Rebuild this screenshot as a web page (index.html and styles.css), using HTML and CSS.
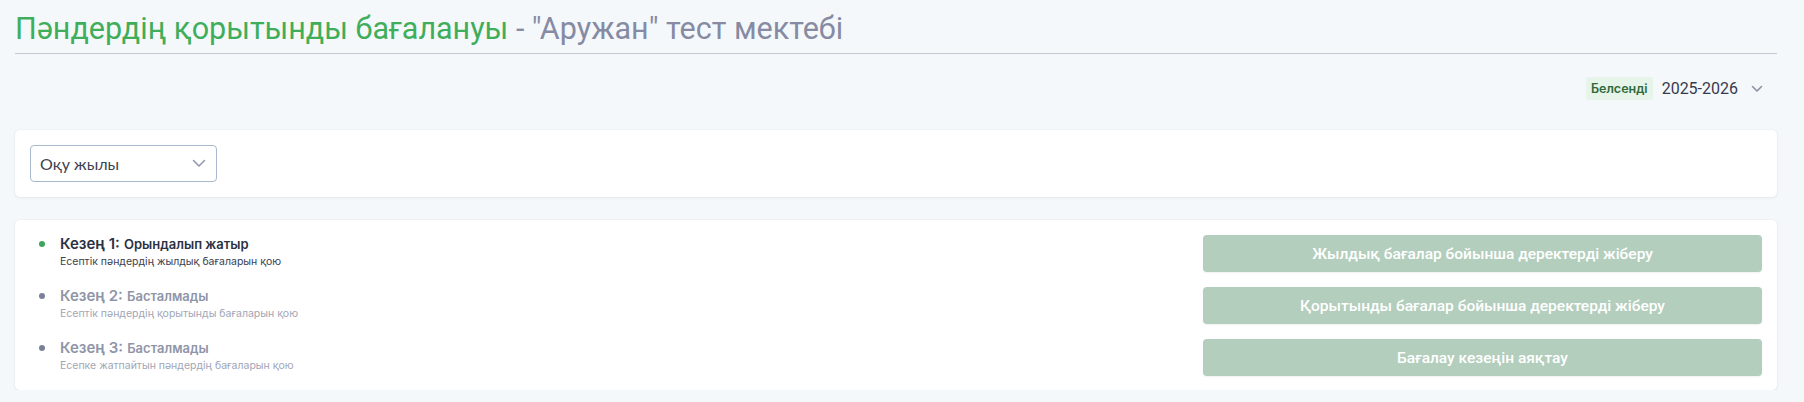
FILE: index.html
```html
<!DOCTYPE html>
<html lang="kk">
<head>
<meta charset="utf-8">
<title>Пəндердің қорытынды бағалануы</title>
<link rel="stylesheet" href="styles.css">
</head>
<body>
<div class="page">
  <header class="page-header">
    <h1 class="page-title"><span class="title-main">Пəндердің қорытынды бағалануы</span><span class="title-sub"> - "Аружан" тест мектебі</span></h1>
  </header>

  <div class="year-bar">
    <span class="badge">Белсенді</span>
    <span class="year">2025-2026</span>
    <svg class="year-chevron" width="12" height="8" viewBox="0 0 12 8"><path d="M1.5 1.5 L6 6 L10.5 1.5" fill="none" stroke="currentColor" stroke-width="1.6" stroke-linecap="round" stroke-linejoin="round"/></svg>
  </div>

  <section class="card filter-card">
    <div class="select">
      <span class="select-label">Оқу жылы</span>
      <svg class="select-chevron" width="14" height="9" viewBox="0 0 14 9"><path d="M1.5 1.5 L7 7 L12.5 1.5" fill="none" stroke="currentColor" stroke-width="1.5" stroke-linecap="round" stroke-linejoin="round"/></svg>
    </div>
  </section>

  <section class="card stages-card">
    <div class="stage-row active">
      <div class="stage-info">
        <span class="dot"></span>
        <div class="stage-text">
          <div class="stage-title"><b>Кезең 1:</b> <span class="stage-status">Орындалып жатыр</span></div>
          <div class="stage-desc">Есептік пəндердің жылдық бағаларын қою</div>
        </div>
      </div>
      <button class="stage-btn" type="button">Жылдық бағалар бойынша деректерді жіберу</button>
    </div>
    <div class="stage-row">
      <div class="stage-info">
        <span class="dot"></span>
        <div class="stage-text">
          <div class="stage-title"><b>Кезең 2:</b> <span class="stage-status">Басталмады</span></div>
          <div class="stage-desc">Есептік пəндердің қорытынды бағаларын қою</div>
        </div>
      </div>
      <button class="stage-btn" type="button">Қорытынды бағалар бойынша деректерді жіберу</button>
    </div>
    <div class="stage-row">
      <div class="stage-info">
        <span class="dot"></span>
        <div class="stage-text">
          <div class="stage-title"><b>Кезең 3:</b> <span class="stage-status">Басталмады</span></div>
          <div class="stage-desc">Есепке жатпайтын пəндердің бағаларын қою</div>
        </div>
      </div>
      <button class="stage-btn" type="button">Бағалау кезеңін аяқтау</button>
    </div>
  </section>
</div>
</body>
</html>
```

FILE: styles.css
```css
* { box-sizing: border-box; }

html, body {
  margin: 0;
  padding: 0;
  background: #f5f8fb;
}

body {
  font-family: Inter, "Noto Sans", sans-serif;
  color: #2c3142;
}

.page {
  padding: 0 27px 0 15px;
}

.page-header {
  padding-top: 11px;
}

.page-title {
  margin: 0;
  font-family: Roboto, "Liberation Sans", sans-serif;
  font-weight: 400;
  font-size: 30.5px;
  line-height: 36px;
  padding-bottom: 6px;
  border-bottom: 1px solid #c6c9d3;
}

.title-main { color: #3fae5b; }
.title-sub { color: #868ba3; }

.year-bar {
  margin-top: 23px;
  height: 23px;
  display: flex;
  justify-content: flex-end;
  align-items: center;
  padding-right: 14px;
}

.badge {
  height: 23px;
  display: inline-flex;
  align-items: center;
  padding: 0 5px;
  background: #e6f4ea;
  color: #2f6a3b;
  font-size: 12.5px;
  font-weight: 600;
  border-radius: 3px;
}

.year {
  margin-left: 9px;
  font-family: Roboto, "Liberation Sans", sans-serif;
  font-size: 16px;
  color: #363b4e;
}

.year-chevron {
  margin-left: 13px;
  color: #8b91a4;
}

.card {
  background: #ffffff;
  border-radius: 5px;
  box-shadow: 0 1px 3px rgba(30, 40, 70, 0.07), 0 0 0 1px rgba(30, 40, 70, 0.02);
}

.filter-card {
  margin-top: 30px;
  padding: 15px;
}

.select {
  width: 187px;
  height: 37px;
  border: 1px solid #a9b8cc;
  border-radius: 4px;
  display: flex;
  align-items: center;
  justify-content: space-between;
  padding: 0 9px 0 9px;
}

.select-label {
  font-family: Lato, Inter, sans-serif;
  font-size: 16px;
  color: #3d4250;
}

.select-chevron {
  color: #8e97a9;
  margin-right: 1px;
}

.stages-card {
  margin-top: 23px;
  padding: 15px 15px 14px 15px;
  display: flex;
  flex-direction: column;
  gap: 15px;
}

.stage-row {
  display: flex;
  justify-content: space-between;
  align-items: flex-start;
  height: 37px;
}

.stage-info {
  display: flex;
  align-items: flex-start;
  padding-left: 9px;
}

.dot {
  width: 6px;
  height: 6px;
  border-radius: 50%;
  background: #7a8097;
  margin-top: 6px;
  margin-right: 15px;
  flex: none;
}

.stage-row.active .dot { background: #3ea55c; }

.stage-title {
  font-size: 15px;
  line-height: 18px;
  color: #8f95a8;
}

.stage-title b { font-weight: 600; }

.stage-status {
  font-size: 13px;
  font-weight: 600;
}

.stage-desc {
  margin-top: 2px;
  font-size: 10.5px;
  line-height: 14px;
  color: #a1a6b5;
}

.stage-row.active .stage-title { color: #2c3142; }
.stage-row.active .stage-desc { color: #3b4050; }

.stage-btn {
  width: 559px;
  height: 37px;
  border: none;
  border-radius: 4px;
  background: #b3cebd;
  color: #ffffff;
  font-family: Roboto, "Liberation Sans", sans-serif;
  font-weight: 500;
  font-size: 15.5px;
  box-shadow: 0 1px 2px rgba(0, 0, 0, 0.06);
  padding: 0;
  cursor: default;
}
```
